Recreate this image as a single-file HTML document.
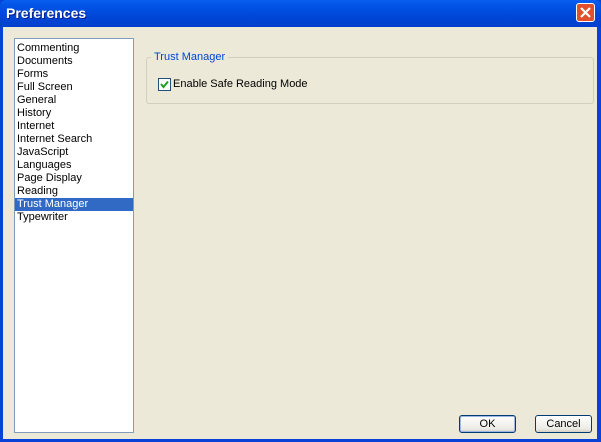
<!DOCTYPE html>
<html><head><style>
body{margin:0;width:601px;height:442px;overflow:hidden;font-family:"Liberation Sans",Tahoma,sans-serif;font-size:11px}
.win{position:absolute;left:0;top:0;width:601px;height:442px;background:#0842d6}
.title{position:absolute;left:0;top:0;width:601px;height:27px;background:linear-gradient(#0a5ef0 0%,#0256e8 15%,#0046d8 60%,#0040cc 100%);border-radius:6px 6px 0 0}
.title span{position:absolute;left:6px;top:5px;color:#fff;font-weight:bold;font-size:14px;text-shadow:1px 1px #0a1e8c}
.close{position:absolute;left:576px;top:3px;width:19px;height:19px;border:1px solid #fff;border-radius:3px;background:#e0502a;box-sizing:border-box}
.client{position:absolute;left:3px;top:27px;width:594px;height:412px;background:#ece9d8}
.list{position:absolute;left:11px;top:11px;width:120px;height:395px;background:#fff;border:1px solid #7f9db9;box-sizing:border-box;padding-top:3px}
.list div{height:13px;line-height:13px;padding-left:2px;color:#000}
.list .sel{background:#316ac5;color:#fff}
.grp{position:absolute;left:143px;top:30px;width:448px;height:47px;border:1px solid #d0d0bf;border-radius:3px;box-sizing:border-box}
.grp .lbl{position:absolute;left:4px;top:-7px;background:#ece9d8;color:#0046d5;padding:0 3px}
.cb{position:absolute;left:11px;top:20px;width:13px;height:13px;border:1px solid #1c5180;background:#fff;box-sizing:border-box}
.cbt{position:absolute;left:26px;top:20px}
.btn{position:absolute;top:388px;width:57px;height:18px;border:1px solid #003c74;border-radius:3px;box-sizing:border-box;background:linear-gradient(#fff,#ecebe6 80%,#d6d0c5);text-align:center;line-height:16px}
</style></head><body>
<div class="win">
<div class="title"><span>Preferences</span>
<div class="close"><svg width="17" height="17" viewBox="0 0 17 17"><path d="M4 4L13 13M13 4L4 13" stroke="#fff" stroke-width="2.2"/></svg></div></div>
<div class="client">
<div class="list">
<div>Commenting</div><div>Documents</div><div>Forms</div><div>Full Screen</div><div>General</div><div>History</div><div>Internet</div><div>Internet Search</div><div>JavaScript</div><div>Languages</div><div>Page Display</div><div>Reading</div><div class="sel">Trust Manager</div><div>Typewriter</div>
</div>
<div class="grp"><span class="lbl">Trust Manager</span>
<div class="cb"><svg width="11" height="11" viewBox="0 0 11 11"><path d="M2 5L4.5 8L9 2.5" stroke="#21a121" stroke-width="2" fill="none"/></svg></div>
<span class="cbt">Enable Safe Reading Mode</span></div>
<div class="btn" style="left:456px;box-shadow:inset 0 0 0 1px #9cb6e6">OK</div>
<div class="btn" style="left:532px">Cancel</div>
</div></div>
</body></html>
